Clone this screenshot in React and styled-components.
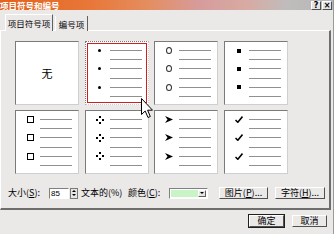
import React from "react";
import styled, { createGlobalStyle } from "styled-components";

const GlobalStyle = createGlobalStyle`
  html, body {
    margin: 0;
    padding: 0;
    background: #ebe8e8;
  }
  body {
    font-family: "Noto Sans CJK SC", "DejaVu Sans", sans-serif;
    color: #000;
  }
`;

const Dialog = styled.div`
  position: relative;
  width: 334px;
  height: 234px;
  overflow: hidden;
  background: #ebe8e8;
  box-sizing: border-box;
  border-right: 1px solid #9a9a9a;
`;

const TitleBar = styled.div`
  height: 10px;
  display: flex;
  align-items: center;
  justify-content: space-between;
  overflow: hidden;
  background: linear-gradient(
    to right,
    #e4621c 0%,
    #e8783a 28%,
    #e48e62 45%,
    #d69c9c 60%,
    #d8aaa2 74%,
    #c0bcbc 86%,
    #b6b6b6 100%
  );
`;

const Title = styled.span`
  color: #fff;
  font-weight: bold;
  font-size: 8.5px;
  line-height: 10px;
  height: 10px;
  white-space: nowrap;
`;

const Caption = styled.div`
  display: flex;
  gap: 1px;
  padding-right: 1px;
`;

const CaptionButton = styled.div`
  width: 10px;
  height: 9px;
  box-sizing: border-box;
  background: #e4e2e2;
  border-top: 1px solid #fff;
  border-left: 1px solid #fff;
  border-right: 1px solid #505050;
  border-bottom: 1px solid #505050;
  font-family: "DejaVu Sans", sans-serif;
  font-weight: bold;
  font-size: 8px;
  line-height: 7px;
  text-align: center;
`;

const Tabs = styled.div`
  display: flex;
  align-items: flex-end;
  height: 16px;
  margin-top: 5px;
  padding-left: 5px;
  position: relative;
  z-index: 1;
  margin-bottom: -1px;
`;

const Tab = styled.div`
  width: ${(p) => p.$w}px;
  height: ${(p) => (p.$active ? 17 : 15)}px;
  box-sizing: border-box;
  margin-right: 2px;
  border-left: 1px solid #fff;
  border-top: ${(p) => (p.$active ? "1px solid #fff" : "none")};
  border-right: 1px solid #606060;
  background: #ebe8e8;
  font-size: 8.5px;
  display: flex;
  align-items: center;
  justify-content: center;
  white-space: nowrap;
`;

const Panel = styled.div`
  margin-right: 2px;
  border-top: 1px solid #fff;
  border-left: 1px solid #fff;
  border-right: 2px solid #6e6e6e;
  border-bottom: 2px solid #6e6e6e;
  padding: 10px 0 9px 7px;
`;

const Grid = styled.div`
  display: grid;
  grid-template-columns: repeat(4, 64px);
  grid-auto-rows: 64px;
  column-gap: 5.5px;
  row-gap: 5px;
  margin-left: 7px;
`;

const Cell = styled.div`
  position: relative;
  box-sizing: border-box;
  background: #fff;
  border-top: 1px ${(p) => (p.$selected ? "dotted" : "solid")} #7a7a7a;
  border-left: 1px ${(p) => (p.$selected ? "dotted" : "solid")} #7a7a7a;
  border-right: 1px ${(p) => (p.$selected ? "dotted" : "solid")} #cfcfcf;
  border-bottom: 1px ${(p) => (p.$selected ? "dotted" : "solid")} #cfcfcf;
  padding: 4px 0 0 8px;
  display: flex;
  flex-direction: column;
  ${(p) =>
    p.$none &&
    `
    padding: 0;
    align-items: center;
    justify-content: center;
    font-size: 11px;
  `}

  &::after {
    content: "";
    display: ${(p) => (p.$selected ? "block" : "none")};
    position: absolute;
    top: 1px;
    left: 1px;
    right: 1px;
    bottom: 1px;
    border: 1.5px solid #d41c1c;
  }
`;

const Item = styled.div`
  display: grid;
  grid-template-columns: 12px 32px;
  column-gap: 4px;
  grid-template-rows: 9.2px 9.2px;
  align-items: center;
`;

const Line = styled.div`
  grid-column: 2;
  grid-row: ${(p) => p.$row};
  height: 1px;
  background: #909090;
`;

const MarkBox = styled.div`
  grid-column: 1;
  grid-row: 1;
  display: flex;
  align-items: center;
  justify-content: center;
  height: 9px;
`;

const Dot = styled.span`
  width: 3px;
  height: 3px;
  border-radius: 50%;
  background: #000;
`;

const Ring = styled.span`
  width: 4px;
  height: 5px;
  border-radius: 50%;
  border: 1px solid #333;
`;

const Square = styled.span`
  width: 4px;
  height: 4px;
  background: #000;
`;

const HollowSquare = styled.span`
  width: 5px;
  height: 5px;
  border: 1.5px solid #000;
`;

const Marker = ({ kind }) => {
  let mark = null;
  if (kind === "dot") mark = <Dot />;
  if (kind === "ring") mark = <Ring />;
  if (kind === "square") mark = <Square />;
  if (kind === "hollow") mark = <HollowSquare />;
  if (kind === "diamonds")
    mark = (
      <svg width="8" height="8" viewBox="0 0 8 8">
        <rect x="3" y="0" width="2" height="2" fill="#000" />
        <rect x="0" y="3" width="2" height="2" fill="#000" />
        <rect x="6" y="3" width="2" height="2" fill="#000" />
        <rect x="3" y="6" width="2" height="2" fill="#000" />
      </svg>
    );
  if (kind === "arrow")
    mark = (
      <svg width="8" height="7" viewBox="0 0 8 7">
        <path d="M0 0 L8 3.5 L0 7 L2.5 3.5 Z" fill="#000" />
      </svg>
    );
  if (kind === "check")
    mark = (
      <svg width="8" height="7" viewBox="0 0 8 7">
        <path d="M0.5 4 L2.8 6.3 L7.5 0.6" stroke="#000" strokeWidth="1.5" fill="none" />
      </svg>
    );
  return <MarkBox>{mark}</MarkBox>;
};

const BulletCell = ({ kind, selected }) => (
  <Cell $selected={selected}>
    {[0, 1, 2].map((i) => (
      <Item key={i}>
        <Marker kind={kind} />
        <Line $row={1} />
        <Line $row={2} />
      </Item>
    ))}
  </Cell>
);

const BottomRow = styled.div`
  display: flex;
  align-items: center;
  height: 12px;
  margin-top: 13px;
  font-size: 9px;
  white-space: nowrap;
`;

const Label = styled.span`
  width: ${(p) => p.$w}px;
  margin-left: ${(p) => p.$ml || 0}px;
  flex-shrink: 0;
  line-height: 12px;
`;

const Sunken = styled.div`
  box-sizing: border-box;
  height: 11px;
  border-top: 1px solid #808080;
  border-left: 1px solid #808080;
  border-right: 1px solid #fff;
  border-bottom: 1px solid #fff;
  background: #fff;
`;

const SizeInput = styled(Sunken)`
  width: 20px;
  font-family: "Liberation Sans", sans-serif;
  font-size: 8px;
  line-height: 9px;
  padding-left: 1px;
`;

const Spin = styled.div`
  width: 8px;
  height: 11px;
  margin-left: 1px;
  box-sizing: border-box;
  border: 1px solid #7a7a7a;
  background: #e6e4e4;
  display: flex;
  flex-direction: column;
  align-items: center;
  justify-content: space-around;
  padding: 1px 0;
`;

const Tri = styled.span`
  width: 0;
  height: 0;
  border-left: 2px solid transparent;
  border-right: 2px solid transparent;
  ${(p) => (p.$up ? "border-bottom: 2px solid #000;" : "border-top: 2px solid #000;")}
`;

const ColorBox = styled(Sunken)`
  width: 39px;
  display: flex;
  padding: 1px;
  background: #fff;
`;

const Swatch = styled.div`
  flex: 1;
  background: #c8f4c6;
`;

const DropButton = styled.div`
  width: 8px;
  box-sizing: border-box;
  border-top: 1px solid #fff;
  border-left: 1px solid #fff;
  border-right: 1px solid #606060;
  border-bottom: 1px solid #606060;
  background: #e6e4e4;
  display: flex;
  align-items: center;
  justify-content: center;
`;

const Button = styled.div`
  width: ${(p) => p.$w}px;
  height: 12px;
  margin-left: ${(p) => p.$ml || 0}px;
  box-sizing: border-box;
  background: #ebe8e8;
  border-top: 1px solid #fff;
  border-left: 1px solid #fff;
  border-right: 1px solid #505050;
  border-bottom: 1px solid #505050;
  box-shadow: ${(p) => (p.$default ? "0 0 0 1px #202020" : "none")};
  font-size: 9px;
  line-height: 10px;
  display: flex;
  align-items: center;
  justify-content: center;
  flex-shrink: 0;
  white-space: nowrap;
`;

const Footer = styled.div`
  display: flex;
  justify-content: flex-end;
  gap: 8px;
  padding-right: 6px;
  margin-top: 5px;
`;

const Cursor = styled.svg`
  position: absolute;
  left: 141px;
  top: 98px;
  z-index: 5;
`;

export default function App() {
  return (
    <>
      <GlobalStyle />
      <Dialog>
        <TitleBar>
          <Title>项目符号和编号</Title>
          <Caption>
            <CaptionButton>?</CaptionButton>
            <CaptionButton>×</CaptionButton>
          </Caption>
        </TitleBar>
        <Tabs>
          <Tab $w={48} $active>
            项目符号项
          </Tab>
          <Tab $w={33}>编号项</Tab>
        </Tabs>
        <Panel>
          <Grid>
            <Cell $none>无</Cell>
            <BulletCell kind="dot" selected />
            <BulletCell kind="ring" />
            <BulletCell kind="square" />
            <BulletCell kind="hollow" />
            <BulletCell kind="diamonds" />
            <BulletCell kind="arrow" />
            <BulletCell kind="check" />
          </Grid>
          <BottomRow>
            <Label $w={41}>
              大小(<u>S</u>):
            </Label>
            <SizeInput>85</SizeInput>
            <Spin>
              <Tri $up />
              <Tri />
            </Spin>
            <Label $w={47} $ml={3}>
              文本的(%)
            </Label>
            <Label $w={41}>
              颜色(<u>C</u>):
            </Label>
            <ColorBox>
              <Swatch />
              <DropButton>
                <Tri />
              </DropButton>
            </ColorBox>
            <Button $w={49} $ml={11}>
              图片(<u>P</u>)...
            </Button>
            <Button $w={50} $ml={7}>
              字符(<u>H</u>)...
            </Button>
          </BottomRow>
        </Panel>
        <Footer>
          <Button $w={35} $default>
            确定
          </Button>
          <Button $w={35}>取消</Button>
        </Footer>
        <Cursor width="13" height="21" viewBox="0 0 13 21">
          <path
            d="M0.5 0.5 L0.5 16.5 L4.2 13 L7 19.5 L9.3 18.5 L6.6 12.2 L11.5 12.2 Z"
            fill="#fff"
            stroke="#000"
            strokeWidth="1"
          />
        </Cursor>
      </Dialog>
    </>
  );
}
